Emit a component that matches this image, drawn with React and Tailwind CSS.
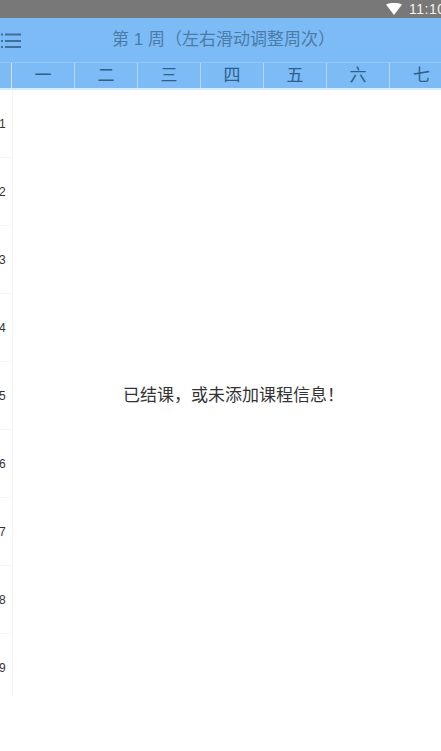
const days = ['一', '二', '三', '四', '五', '六', '七'];
const sections = [1, 2, 3, 4, 5, 6, 7, 8, 9];

function StatusBar() {
    return (
        <div className="flex h-[18px] items-center justify-end overflow-hidden bg-[#787878]">
            <svg width="16" height="12" viewBox="0 0 16 12" className="mr-[7px] shrink-0">
                <path d="M0 1.5C4.500 -0.700 11.500 -0.700 16 1.500L8 12Z" fill="#ffffff" />
            </svg>
            <span className="w-[32px] shrink-0 whitespace-nowrap text-[14px] leading-[18px] tracking-[0.5px] text-[#f2f2f2]">11:10</span>
        </div>
    );
}

function Header() {
    return (
        <div className="relative flex h-[44px] items-center justify-center bg-[#7cbbf6]">
            <svg width="20" height="16" viewBox="0 0 20 16" className="absolute left-[1px] top-[15px]">
                <g fill="#3f6f9c">
                    <rect x="0" y="0.500" width="2" height="2" />
                    <rect x="0" y="7" width="2" height="2" />
                    <rect x="0" y="13" width="2" height="2" />
                    <rect x="4" y="0.500" width="16" height="2" />
                    <rect x="4" y="7" width="16" height="2" />
                    <rect x="4" y="13" width="16" height="2" />
                </g>
            </svg>
            <span className="ml-[6px] text-[17px] text-[#4a7ba6]">第 1 周（左右滑动调整周次）</span>
        </div>
    );
}

function WeekRow() {
    return (
        <div className="flex h-[28px] border-t border-b-2 border-t-[#94c8f8] border-b-[#d6ebfd] bg-[#7cbbf6]">
            <div className="w-[12px] shrink-0 border-r border-[#cde6fc]" />
            {days.map((day) => (
                <div
                    key={day}
                    className="flex w-[63px] shrink-0 items-center justify-center border-r border-[#b4d9fb] pt-[1px] text-[17px] text-[#2f5f8c] last:border-r-0"
                >
                    {day}
                </div>
            ))}
        </div>
    );
}

function App() {
    return (
        <div
            className="relative h-[751px] w-[441px] overflow-hidden bg-white"
            style={{ fontFamily: '"Liberation Sans", "Noto Sans CJK SC", sans-serif' }}
        >
            <StatusBar />
            <Header />
            <WeekRow />
            <div className="h-[606px] w-[13px] overflow-hidden border-r border-[#f5f5f5]">
                {sections.map((n) => (
                    <div
                        key={n}
                        className="flex h-[68px] items-center border-b border-[#f5f5f5] text-[12px] text-[#333333]"
                    >
                        <span className="-ml-[1px]">{n}</span>
                    </div>
                ))}
            </div>
            <div className="absolute left-0 right-0 top-[385px] text-center text-[17px] leading-[22px] text-[#333333]">
                <span className="ml-[26px]">已结课，或未添加课程信息！</span>
            </div>
        </div>
    );
}

export default App;
